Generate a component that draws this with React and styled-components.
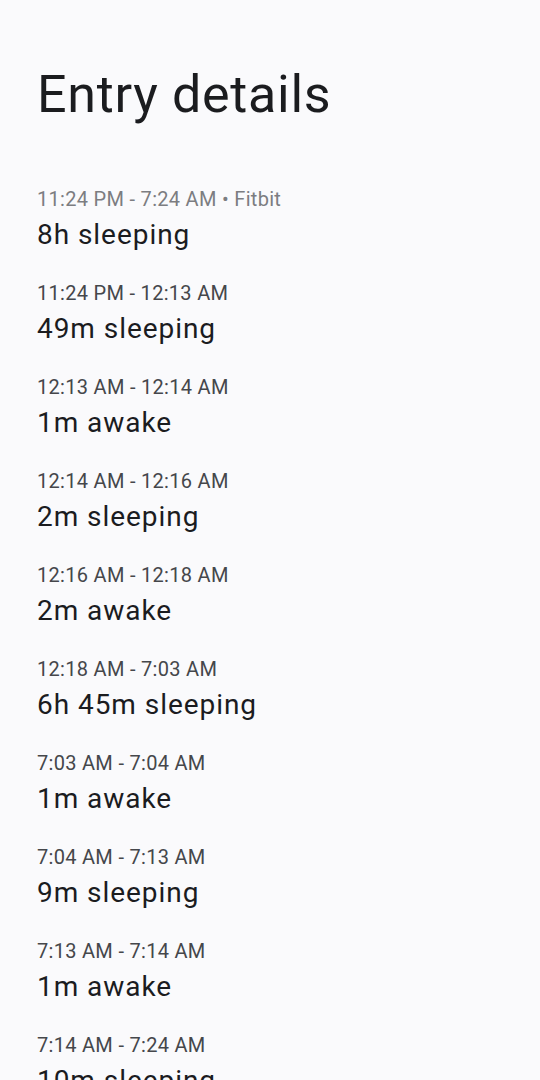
import React from "react";
import styled, { createGlobalStyle } from "styled-components";

const Global = createGlobalStyle`
  html, body { margin: 0; padding: 0; background: #fafafc; }
  body { font-family: Roboto, "Noto Sans", sans-serif; -webkit-font-smoothing: antialiased; }
`;

const Page = styled.main`
  box-sizing: border-box;
  padding: 63px 24px 0 37px;
  background: #fafafc;
  overflow: hidden;
  height: 1080px;
`;

const Title = styled.h1`
  margin: 0;
  font-size: 52px;
  line-height: 64px;
  font-weight: 400;
  color: #1b1c1f;
  letter-spacing: 0.7px;
`;

const List = styled.ul`
  list-style: none;
  margin: 58px 0 0;
  padding: 0;
  display: flex;
  flex-direction: column;
  gap: 26px;
`;

const Item = styled.li`
  display: flex;
  flex-direction: column;
  gap: 4px;
`;

const Time = styled.span`
  font-size: 20px;
  line-height: 28px;
  letter-spacing: 0.3px;
  color: ${(p) => (p.$muted ? "#7c7d81" : "#45474b")};
`;

const Label = styled.span`
  font-size: 28px;
  line-height: 36px;
  letter-spacing: 0.95px;
  color: #1b1c1f;
  white-space: nowrap;
`;

const entries = [
  { time: "11:24 PM - 7:24 AM • Fitbit", label: "8h sleeping", muted: true },
  { time: "11:24 PM - 12:13 AM", label: "49m sleeping" },
  { time: "12:13 AM - 12:14 AM", label: "1m awake" },
  { time: "12:14 AM - 12:16 AM", label: "2m sleeping" },
  { time: "12:16 AM - 12:18 AM", label: "2m awake" },
  { time: "12:18 AM - 7:03 AM", label: "6h 45m sleeping" },
  { time: "7:03 AM - 7:04 AM", label: "1m awake" },
  { time: "7:04 AM - 7:13 AM", label: "9m sleeping" },
  { time: "7:13 AM - 7:14 AM", label: "1m awake" },
  { time: "7:14 AM - 7:24 AM", label: "10m sleeping" },
];

export default function App() {
  return (
    <>
      <Global />
      <Page>
        <Title>Entry details</Title>
        <List>
          {entries.map((e, i) => (
            <Item key={i}>
              <Time $muted={e.muted}>{e.time}</Time>
              <Label>{e.label}</Label>
            </Item>
          ))}
        </List>
      </Page>
    </>
  );
}
